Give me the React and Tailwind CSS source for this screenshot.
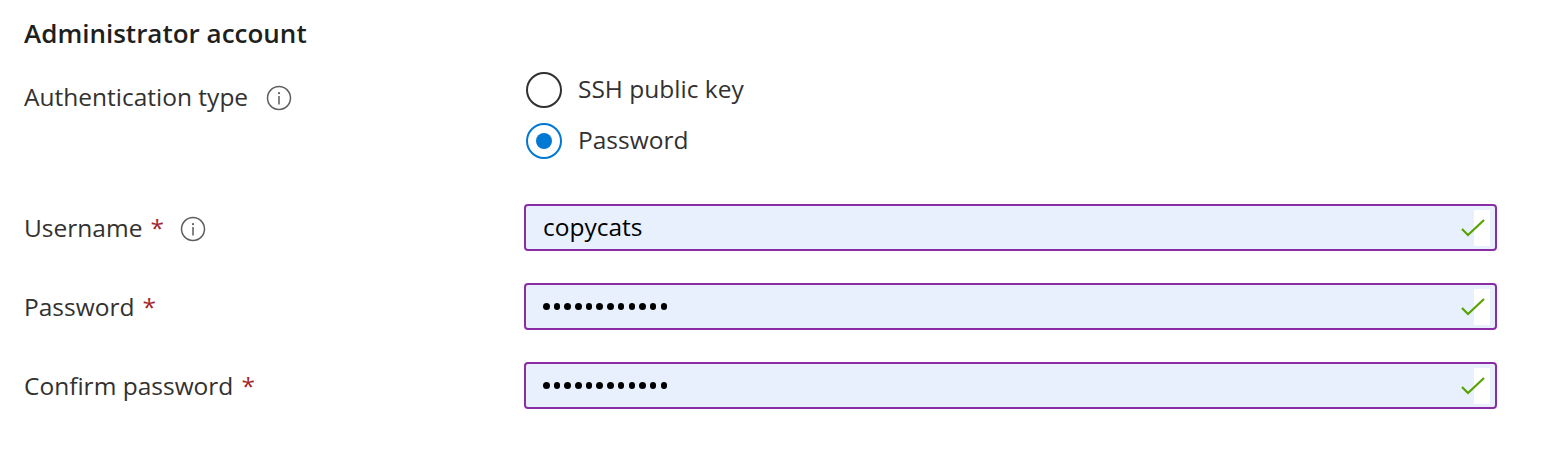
import { useState } from "react";

const font = { fontFamily: '"Open Sans", "Noto Sans", sans-serif' };

function InfoIcon() {
  return (
    <svg width="26" height="26" viewBox="0 0 26 26" className="shrink-0">
      <circle cx="13" cy="13" r="11.5" fill="none" stroke="#605e5c" strokeWidth="1.5" />
      <circle cx="13" cy="8.2" r="1.1" fill="#605e5c" />
      <rect x="12.25" y="11" width="1.5" height="8.5" fill="#605e5c" />
    </svg>
  );
}

function Check() {
  return (
    <div className="absolute top-[4px] right-[5px] bottom-[3px] w-[16px] bg-white">
      <svg
        width="30"
        height="20"
        viewBox="0 0 30 20"
        className="absolute top-[9px] right-0"
      >
        <path d="M2 10 L8 16 L24 1" fill="none" stroke="#57a300" strokeWidth="2.2" />
      </svg>
    </div>
  );
}

function Field({ children }) {
  return (
    <div className="relative flex h-[47px] w-[973px] items-center rounded-[4px] border-2 border-[#8a2da5] bg-[#e8f0fe] pl-[17px]">
      {children}
      <Check />
    </div>
  );
}

function Dots() {
  return (
    <div className="flex gap-[4.2px]">
      {Array.from({ length: 12 }).map((_, i) => (
        <div key={i} className="h-[6.5px] w-[6.5px] rounded-full bg-black" />
      ))}
    </div>
  );
}

function Radio({ checked, label, onClick }) {
  return (
    <button onClick={onClick} className="ml-[2px] flex h-[51px] items-center gap-[16px] text-left">
      {checked ? (
        <span className="flex h-[36px] w-[36px] items-center justify-center rounded-full border-2 border-[#0078d4]">
          <span className="h-[16px] w-[16px] rounded-full bg-[#0078d4]" />
        </span>
      ) : (
        <span className="h-[36px] w-[36px] rounded-full border-2 border-[#323130]" />
      )}
      <span className="text-[24.5px] text-[#323130]">{label}</span>
    </button>
  );
}

const Star = () => <span className="ml-[8px] text-[24.5px] text-[#a4262c]">*</span>;

export default function App() {
  const [auth, setAuth] = useState("password");

  return (
    <div style={font} className="h-[454px] w-[1560px] bg-white pl-[24px] pt-[14px] text-[#323130]">
      <h2 className="text-[26px] font-semibold leading-[38px] text-[#201f1e]">
        Administrator account
      </h2>

      <div className="mt-[12px] grid grid-cols-[500px_973px]">
        <div className="mt-[8px] flex h-[51px] items-center gap-[18px]">
          <span className="text-[24.5px]">Authentication type</span>
          <InfoIcon />
        </div>
        <div className="flex flex-col">
          <Radio label="SSH public key" checked={auth === "ssh"} onClick={() => setAuth("ssh")} />
          <Radio label="Password" checked={auth === "password"} onClick={() => setAuth("password")} />
        </div>
      </div>

      <div className="mt-[38px] grid grid-cols-[500px_973px] gap-y-[32px]">
        <div className="flex items-center pt-[2px]">
          <span className="text-[24.5px]">Username</span>
          <Star />
          <span className="ml-[16px] flex">
            <InfoIcon />
          </span>
        </div>
        <Field>
          <span className="text-[24.5px] text-black">copycats</span>
        </Field>

        <div className="flex items-center pt-[2px]">
          <span className="text-[24.5px]">Password</span>
          <Star />
        </div>
        <Field>
          <Dots />
        </Field>

        <div className="flex items-center pt-[2px]">
          <span className="text-[24.5px]">Confirm password</span>
          <Star />
        </div>
        <Field>
          <Dots />
        </Field>
      </div>
    </div>
  );
}
